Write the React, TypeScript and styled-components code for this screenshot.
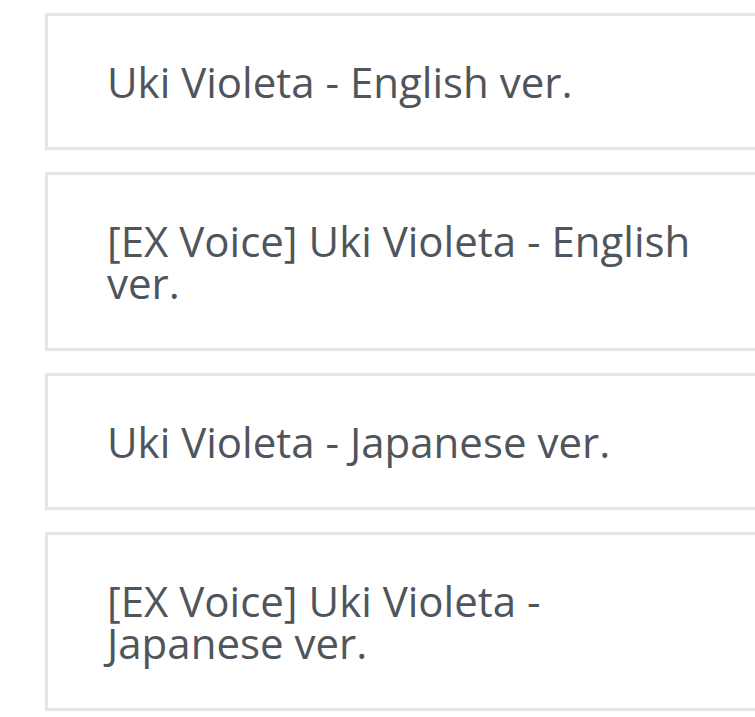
import * as React from 'react';
import styled, { createGlobalStyle } from 'styled-components';

const GlobalStyle = createGlobalStyle`
  html, body {
    margin: 0;
    padding: 0;
    background: #ffffff;
    overflow: hidden;
  }
`;

const List = styled.ul`
  list-style: none;
  margin: 0;
  padding: 13px 0 0 45px;
  display: flex;
  flex-direction: column;
  gap: 22px;
  width: 820px;
`;

const Card = styled.li`
  box-sizing: border-box;
  border: 3px solid #e6e6e6;
  background: #ffffff;
  padding: 44.5px 60px 44.5px 59px;
  font-family: 'Open Sans', 'Noto Sans', sans-serif;
  font-size: 42px;
  line-height: 42px;
  color: #50555b;
`;

const Title = styled.span`
  display: block;
  max-width: 600px;
`;

const tracks = [
  'Uki Violeta - English ver.',
  '[EX Voice] Uki Violeta - English ver.',
  'Uki Violeta - Japanese ver.',
  '[EX Voice] Uki Violeta - Japanese ver.',
];

export default function App() {
  return (
    <>
      <GlobalStyle />
      <List>
        {tracks.map((t) => (
          <Card key={t}>
            <Title>{t}</Title>
          </Card>
        ))}
      </List>
    </>
  );
}
